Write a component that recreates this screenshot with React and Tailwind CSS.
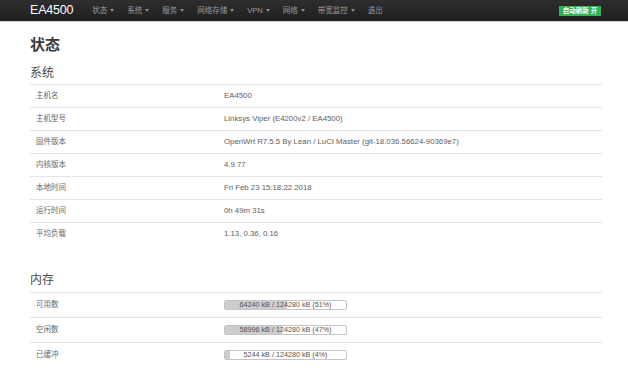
const nav = ['状态', '系统', '服务', '网络存储', 'VPN', '网络', '带宽监控'];

const sysRows = [
  ['主机名', 'EA4500'],
  ['主机型号', 'Linksys Viper (E4200v2 / EA4500)'],
  ['固件版本', 'OpenWrt R7.5.5 By Lean / LuCI Master (git-18.036.56624-90369e7)'],
  ['内核版本', '4.9.77'],
  ['本地时间', 'Fri Feb 23 15:18:22 2018'],
  ['运行时间', '0h 49m 31s'],
  ['平均负载', '1.13, 0.36, 0.16'],
];

const memRows = [
  ['可用数', 64240, 51],
  ['空闲数', 58996, 47],
  ['已缓冲', 5244, 4],
];

function Caret() {
  return (
    <span className="ml-[3px] inline-block w-0 h-0 border-l-[2px] border-r-[2px] border-t-[3px] border-l-transparent border-r-transparent border-t-[#8a8a8a] align-middle" />
  );
}

export default function App() {
  return (
    <div
      className="w-[628px] h-[378px] bg-white overflow-hidden"
      style={{ fontFamily: '"Liberation Sans", "Noto Sans CJK SC", sans-serif' }}
    >
      {/* Top bar */}
      <header className="h-[22px] bg-gradient-to-b from-[#2e2e2e] to-[#1f1f1f] border-b border-[#cfcfcf] flex items-center pl-[30px] pr-[27px]">
        <span className="text-[12.5px] text-white leading-none tracking-[-0.2px]">EA4500</span>
        <nav className="flex items-center gap-[13px] ml-[19px] text-[7.5px] text-[#9a9a9a] leading-none">
          {nav.map((n) => (
            <span key={n} className="flex items-center">
              {n}
              <Caret />
            </span>
          ))}
          <span>退出</span>
        </nav>
        <span className="ml-auto h-[10px] w-[42px] bg-[#2fb25a] text-white text-[6.5px] leading-[10px] text-center font-bold">
          自动刷新 开
        </span>
      </header>

      <main className="pl-[30px] pr-[26px]">
        <h1 className="mt-[14px] text-[15px] leading-[18px] font-bold text-[#3a3a3a]">状态</h1>

        <h2 className="mt-[11px] text-[12px] leading-[16px] text-[#4a4a4a]">系统</h2>
        <div className="mt-[3px]">
          {sysRows.map(([k, v]) => (
            <div
              key={k}
              className="grid grid-cols-[194px_1fr] h-[23px] items-center border-t border-[#e4e4e4] text-[7.8px] text-[#5e5e5e]"
            >
              <span className="pl-[6px] text-[7.5px] text-[#666]">{k}</span>
              <span>{v}</span>
            </div>
          ))}
        </div>

        <h2 className="mt-[27px] text-[12px] leading-[16px] text-[#4a4a4a]">内存</h2>
        <div className="mt-[4px]">
          {memRows.map(([k, used, pct]) => (
            <div
              key={k}
              className="grid grid-cols-[194px_1fr] h-[25px] items-center border-t border-[#e4e4e4] text-[7.5px] text-[#666]"
            >
              <span className="pl-[6px]">{k}</span>
              <div className="relative w-[123px] h-[10px] border border-[#c4c4c4] rounded-[2px] bg-white overflow-hidden">
                <div className="h-full bg-[#cdcdcd]" style={{ width: `${pct}%` }} />
                <span className="absolute inset-0 flex items-center justify-center text-[7.2px] text-[#555] leading-none">
                  {used} kB / 124280 kB ({pct}%)
                </span>
              </div>
            </div>
          ))}
        </div>
      </main>
    </div>
  );
}
